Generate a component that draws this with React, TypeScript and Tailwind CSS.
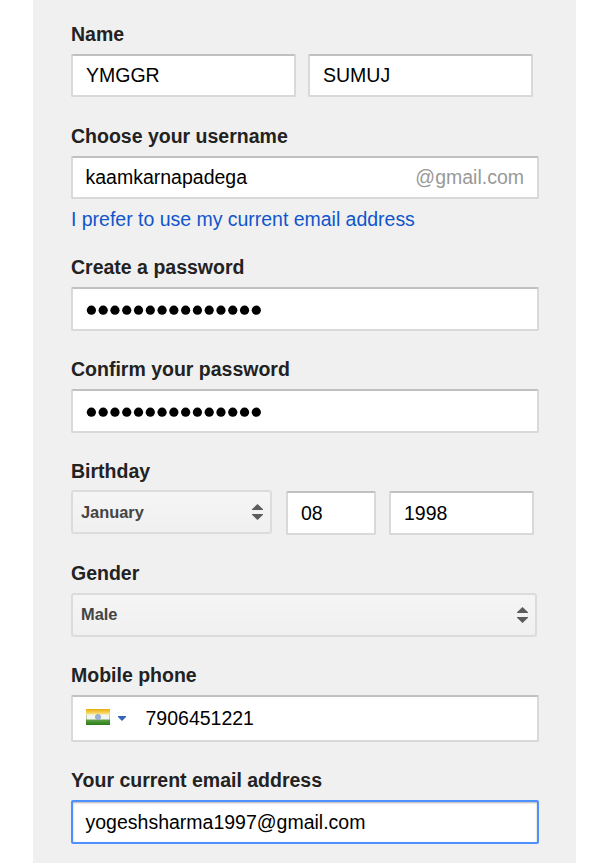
import type { ReactNode } from "react";

const inputBase =
  "flex items-center rounded-[2px] border-2 border-[#d9d9d9] border-t-[#c0c0c0] bg-white px-[13px] text-[19.5px] leading-6 text-black";

function Label({ children }: { children: ReactNode }) {
  return (
    <div className="mb-2 h-6 text-[19.5px] font-bold leading-6 text-[#222]">
      {children}
    </div>
  );
}

function Dots() {
  return (
    <svg className="mt-[3px]" width="178" height="11" viewBox="0 0 178 11">
      {Array.from({ length: 15 }, (_, i) => (
        <circle key={i} cx={5.4 + i * 11.78} cy={5.2} r={4.6} fill="#000" />
      ))}
    </svg>
  );
}

function Arrows() {
  return (
    <svg width="11" height="16" viewBox="0 0 11 16" fill="#5c5c5c">
      <path d="M5.5 0 L11 5.2 V6 H0 V5.2 Z" />
      <path d="M5.5 16 L11 10.8 V10 H0 V10.8 Z" />
    </svg>
  );
}

function Select({
  value,
  className,
  textClassName = "",
}: {
  value: string;
  className: string;
  textClassName?: string;
}) {
  return (
    <div
      className={`flex h-11 items-center justify-between rounded-[3px] border-2 border-[#dcdcdc] bg-linear-to-b from-[#f5f5f5] to-[#f0f0f0] pl-2 text-[16.4px] font-bold leading-5 text-[#444] ${className}`}
    >
      <span className={textClassName}>{value}</span>
      <Arrows />
    </div>
  );
}

function Flag() {
  return (
    <svg width="24" height="16" viewBox="0 0 24 16">
      <defs>
        <linearGradient id="saffron" x1="0" y1="0" x2="0" y2="1">
          <stop offset="0" stopColor="#e8ac08" />
          <stop offset="1" stopColor="#fae489" />
        </linearGradient>
        <linearGradient id="green" x1="0" y1="0" x2="0" y2="1">
          <stop offset="0" stopColor="#62a64b" />
          <stop offset="1" stopColor="#267b18" />
        </linearGradient>
      </defs>
      <rect width="24" height="16" fill="#f2f4f2" />
      <rect width="24" height="5.5" fill="url(#saffron)" />
      <rect y="10.5" width="24" height="5.5" fill="url(#green)" />
      <circle cx="12" cy="8" r="2.5" fill="#9fb3d6" stroke="#8fa4cd" />
      <path d="M.5 5.5V16M23.5 5.5V16" stroke="#49751f" strokeOpacity=".3" />
    </svg>
  );
}

export default function App() {
  return (
    <div
      className="h-[863px] w-[605px] overflow-hidden bg-white pl-[33px]"
      style={{ fontFamily: '"Liberation Sans", Arial, sans-serif' }}
    >
      <form className="h-full w-[543px] bg-[#f0f0f0] pl-[38px] pt-[22px]">
        <section>
          <Label>Name</Label>
          <div className="flex gap-3">
            <div className={`${inputBase} h-[43px] w-[225px] pb-px`}>YMGGR</div>
            <div className={`${inputBase} h-[43px] w-[225px] pb-px`}>SUMUJ</div>
          </div>
        </section>

        <section className="mt-[27px]">
          <Label>Choose your username</Label>
          <div className={`${inputBase} h-[43px] w-[468px] justify-between pb-px`}>
            <span className="-ml-[0.5px]">kaamkarnapadega</span>
            <span className="text-[#999]">@gmail.com</span>
          </div>
          <a className="mt-2 block h-6 text-[19.5px] leading-6 tracking-[-0.02px] text-[#1155cc]">
            I prefer to use my current email address
          </a>
        </section>

        <section className="mt-6">
          <Label>Create a password</Label>
          <div className={`${inputBase} h-11 w-[468px]`}>
            <Dots />
          </div>
        </section>

        <section className="mt-[26px]">
          <Label>Confirm your password</Label>
          <div className={`${inputBase} h-11 w-[468px]`}>
            <Dots />
          </div>
        </section>

        <section className="mt-[26px]">
          <Label>Birthday</Label>
          <div className="flex">
            <Select value="January" className="-mt-px mb-px w-[201px] pr-[7px]" />
            <div className={`${inputBase} ml-3.5 h-11 w-[90px]`}>08</div>
            <div className={`${inputBase} ml-[13px] h-11 w-[145px]`}>1998</div>
          </div>
        </section>

        <section className="mt-[26px]">
          <Label>Gender</Label>
          <Select value="Male" className="w-[466px] pr-[7px]" textClassName="-mt-0.5" />
        </section>

        <section className="mt-[26px]">
          <Label>Mobile phone</Label>
          <div className={`${inputBase} h-[47px] w-[468px]`}>
            <span className="-mt-[3px]">
              <Flag />
            </span>
            <svg className="ml-2" width="8" height="5" viewBox="0 0 8 5">
              <path d="M0 0H8V1L4 5L0 1Z" fill="#3366bb" />
            </svg>
            <span className="-mt-px ml-[19.5px]">7906451221</span>
          </div>
        </section>

        <section className="mt-[26px]">
          <Label>Your current email address</Label>
          <div className="flex h-11 w-[468px] items-center rounded-[2px] border-2 border-[#4d90fe] bg-white px-[12.5px] text-[19.5px] leading-6 text-black shadow-[inset_0_1px_2px_rgba(0,0,0,0.3)]">
            yogeshsharma1997@gmail.com
          </div>
        </section>
      </form>
    </div>
  );
}
